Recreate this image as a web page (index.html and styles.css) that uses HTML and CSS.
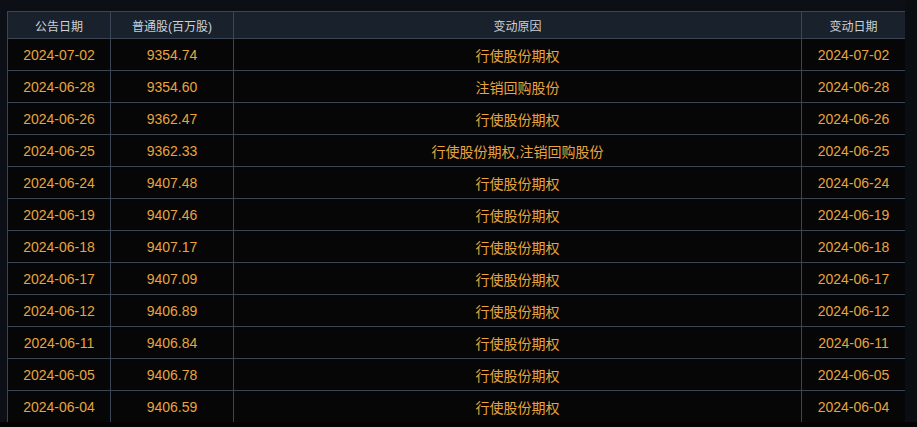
FILE: index.html
```html
<!DOCTYPE html>
<html lang="zh">
<head>
<meta charset="utf-8">
<link rel="stylesheet" href="styles.css">
</head>
<body>
<div class="page">
  <div class="main">
    <div class="scroll">
      <table class="grid">
        <colgroup>
          <col class="c1"><col class="c2"><col class="c3"><col class="c4">
        </colgroup>
        <thead>
          <tr><th>公告日期</th><th>普通股(百万股)</th><th>变动原因</th><th>变动日期</th></tr>
        </thead>
        <tbody>
          <tr><td>2024-07-02</td><td>9354.74</td><td>行使股份期权</td><td>2024-07-02</td></tr>
          <tr><td>2024-06-28</td><td>9354.60</td><td>注销回购股份</td><td>2024-06-28</td></tr>
          <tr><td>2024-06-26</td><td>9362.47</td><td>行使股份期权</td><td>2024-06-26</td></tr>
          <tr><td>2024-06-25</td><td>9362.33</td><td>行使股份期权,注销回购股份</td><td>2024-06-25</td></tr>
          <tr><td>2024-06-24</td><td>9407.48</td><td>行使股份期权</td><td>2024-06-24</td></tr>
          <tr><td>2024-06-19</td><td>9407.46</td><td>行使股份期权</td><td>2024-06-19</td></tr>
          <tr><td>2024-06-18</td><td>9407.17</td><td>行使股份期权</td><td>2024-06-18</td></tr>
          <tr><td>2024-06-17</td><td>9407.09</td><td>行使股份期权</td><td>2024-06-17</td></tr>
          <tr><td>2024-06-12</td><td>9406.89</td><td>行使股份期权</td><td>2024-06-12</td></tr>
          <tr><td>2024-06-11</td><td>9406.84</td><td>行使股份期权</td><td>2024-06-11</td></tr>
          <tr><td>2024-06-05</td><td>9406.78</td><td>行使股份期权</td><td>2024-06-05</td></tr>
          <tr><td>2024-06-04</td><td>9406.59</td><td>行使股份期权</td><td>2024-06-04</td></tr>
        </tbody>
      </table>
    </div>
    <div class="rail"></div>
  </div>
  <div class="foot"></div>
</div>
</body>
</html>
```
FILE: styles.css
```css
html, body {
  margin: 0;
  padding: 0;
  background: #0c1016;
  overflow: hidden;
}
.page {
  width: 917px;
  height: 427px;
  display: flex;
  flex-direction: column;
  font-family: "Liberation Sans", "Noto Sans CJK SC", sans-serif;
}
.main {
  height: 422px;
  display: flex;
  background: #0c1016;
}
.scroll {
  width: 898px;
  padding: 11px 0 0 7px;
  overflow: hidden;
  box-sizing: content-box;
}
.rail {
  flex: 1;
  background: #0a0d12;
}
.foot {
  flex: 1;
  background: #020202;
}
.grid {
  width: 898px;
  table-layout: fixed;
  border-collapse: collapse;
}
.c1 { width: 103px; }
.c2 { width: 123px; }
.c3 { width: 568px; }
.c4 { width: 104px; }
.grid th {
  height: 26px;
  padding: 0;
  background: #18212c;
  color: #cdd1d7;
  font-weight: normal;
  font-size: 12px;
  text-align: center;
  border: 1px solid #3a4555;
}
.grid td {
  height: 31px;
  padding: 0;
  background: #060606;
  color: #e8a43f;
  font-size: 14px;
  text-align: center;
  border: 1px solid #3a4555;
}
```
